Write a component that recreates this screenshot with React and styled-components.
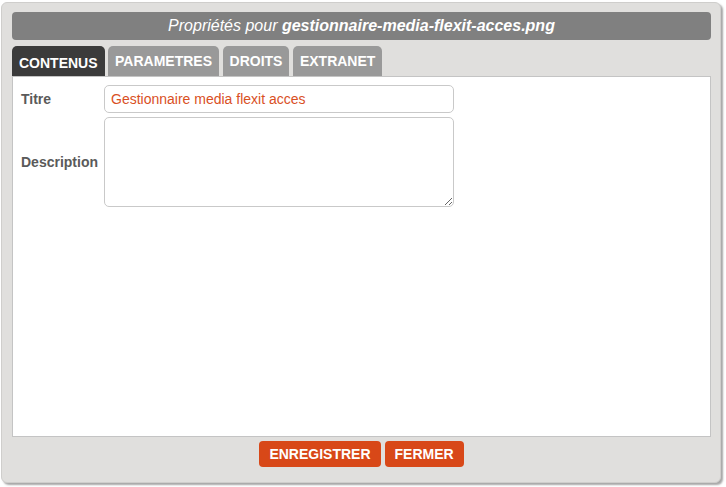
import React from 'react';
import styled, { createGlobalStyle } from 'styled-components';

const GlobalStyle = createGlobalStyle`
  html, body {
    margin: 0;
    padding: 0;
    background: #ffffff;
    font-family: "Liberation Sans", Arial, sans-serif;
  }
`;

const Page = styled.div`
  width: 726px;
  height: 487px;
  position: relative;
  overflow: hidden;
`;

const Dialog = styled.div`
  margin: 2px 0 0 1px;
  width: 720px;
  height: 481px;
  box-sizing: border-box;
  background: #e0dfdd;
  border: 1px solid #cfcecc;
  border-radius: 6px;
  box-shadow: 2px 2px 2px rgba(0, 0, 0, 0.35);
  padding: 9px 9px 0 10px;
  display: flex;
  flex-direction: column;
`;

const TitleBar = styled.div`
  height: 28px;
  background: #808080;
  border-radius: 4px;
  color: #ffffff;
  font-size: 16px;
  font-style: italic;
  display: flex;
  align-items: center;
  justify-content: center;
`;

const TabRow = styled.div`
  display: flex;
  gap: 3.5px;
  margin-top: 6px;
  height: 30px;
`;

const Tab = styled.div`
  padding: ${(p) => (p.active ? '3px 7px 0' : '0 7px')};
  background: ${(p) => (p.active ? '#3b3b3b' : '#999999')};
  color: #ffffff;
  font-size: 14px;
  font-weight: bold;
  border-radius: 5px 5px 0 0;
  display: flex;
  align-items: center;
`;

const Panel = styled.div`
  height: 361px;
  box-sizing: border-box;
  background: #ffffff;
  border: 1px solid #c4c4c4;
  padding: 8px 0 0 8px;
  display: flex;
  flex-direction: column;
  gap: 4px;
`;

const Row = styled.div`
  display: flex;
  align-items: center;
`;

const Label = styled.label`
  width: 83px;
  color: #5a5a5a;
  font-size: 14px;
  font-weight: bold;
`;

const Input = styled.input`
  width: 350px;
  height: 28px;
  box-sizing: border-box;
  border: 1px solid #c9c9c9;
  border-radius: 5px;
  padding: 0 6px;
  font-family: "Liberation Sans", Arial, sans-serif;
  font-size: 14px;
  color: #d9501f;
  outline: none;
`;

const TextArea = styled.textarea`
  width: 350px;
  height: 90px;
  box-sizing: border-box;
  border: 1px solid #c9c9c9;
  border-radius: 5px;
  padding: 4px 6px;
  font-family: "Liberation Sans", Arial, sans-serif;
  font-size: 14px;
  outline: none;
`;

const Footer = styled.div`
  display: flex;
  justify-content: center;
  gap: 4px;
  margin-top: 4px;
`;

const Button = styled.button`
  height: 26px;
  padding: 0 10px;
  border: none;
  border-radius: 4px;
  background: #d84818;
  color: #ffffff;
  font-family: "Liberation Sans", Arial, sans-serif;
  font-size: 14px;
  font-weight: bold;
  cursor: pointer;
`;

const tabs = ['CONTENUS', 'PARAMETRES', 'DROITS', 'EXTRANET'];

export default function App() {
  return (
    <Page>
      <GlobalStyle />
      <Dialog>
        <TitleBar>
          Propriétés pour&nbsp;<b>gestionnaire-media-flexit-acces.png</b>
        </TitleBar>
        <TabRow>
          {tabs.map((t, i) => (
            <Tab key={t} active={i === 0}>
              {t}
            </Tab>
          ))}
        </TabRow>
        <Panel>
          <Row>
            <Label>Titre</Label>
            <Input defaultValue="Gestionnaire media flexit acces" />
          </Row>
          <Row>
            <Label>Description</Label>
            <TextArea />
          </Row>
        </Panel>
        <Footer>
          <Button>ENREGISTRER</Button>
          <Button>FERMER</Button>
        </Footer>
      </Dialog>
    </Page>
  );
}
